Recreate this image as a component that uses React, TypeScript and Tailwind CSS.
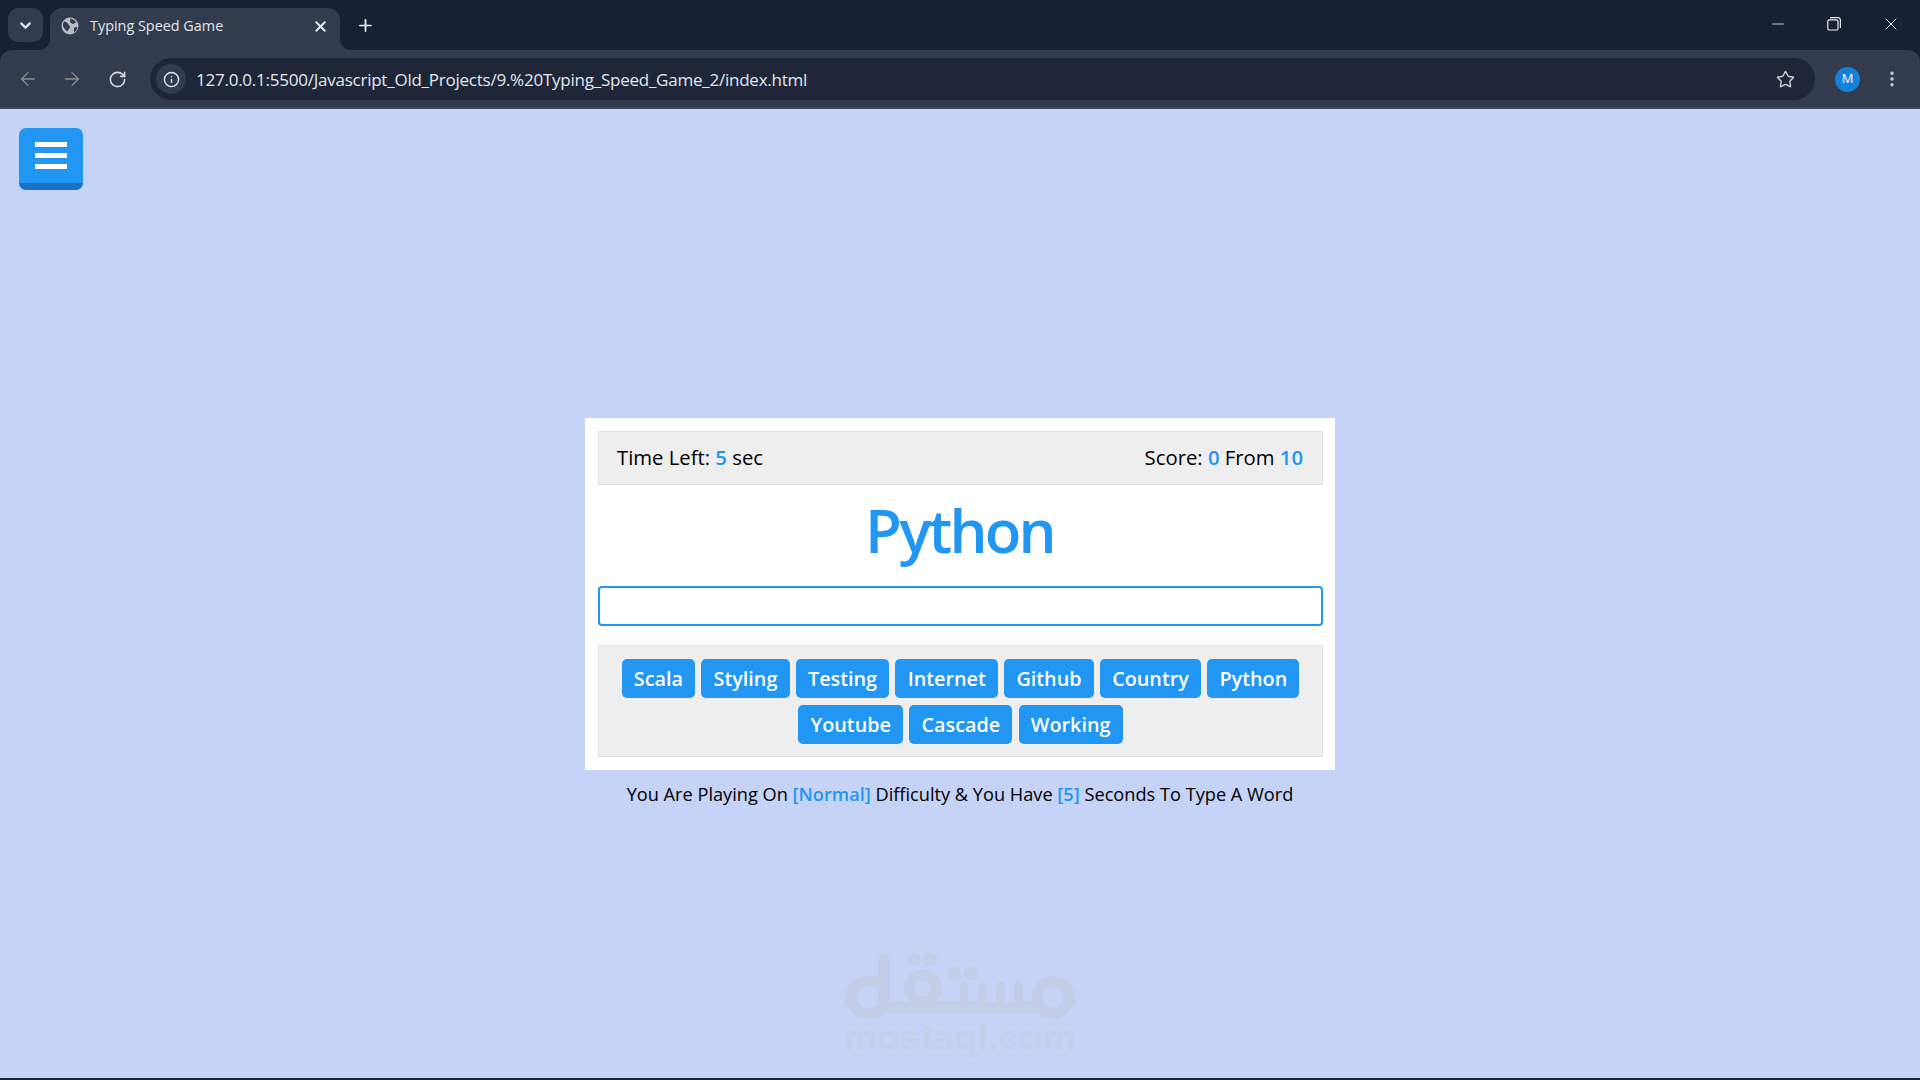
import { ArrowLeft, ArrowRight, ChevronDown, EllipsisVertical, Info, Minus, Plus, RotateCw, Star, X } from "lucide-react";

const words = ["Scala", "Styling", "Testing", "Internet", "Github", "Country", "Python", "Youtube", "Cascade", "Working"];

function Restore() {
  return (
    <svg width="14" height="14" viewBox="0 0 14 14" fill="none" stroke="#e8eaed" strokeWidth="1.2">
      <rect x="0.8" y="2.8" width="10.2" height="10.2" rx="1.6" />
      <path d="M3 .7h8.2a2.2 2.2 0 0 1 2.2 2.2V11" />
    </svg>
  );
}

function Globe() {
  return (
    <svg width="18" height="18" viewBox="0 0 18 18">
      <circle cx="9" cy="9" r="8.5" fill="#b9bcc2" />
      <path d="M3 4.500c2 .3 3.500 1 4 2.500s2 1.200 2 3-2 2-2.500 4.500C4 13 3 11 2 9c0-2 .3-3.300 1-4.500zM9.500 1.500c2 .5 4 1.500 5.500 3.500l-2.500 2c-1.500-.3-3-1-3.500-2.300zM13 10.500l3.500-.5c-.3 2.500-1.500 4.300-3.500 5.500z" fill="#333c4f" />
    </svg>
  );
}

function MostaqlLogo() {
  return (
    <svg width="280" height="100" viewBox="0 0 840 300" fill="none" stroke="#c3cee6" strokeLinecap="round" strokeLinejoin="round">
      <path d="M192 84V232H665" strokeWidth="34" />
      <path d="M172 156C128 146 92 170 92 202C92 234 122 252 150 250C170 248 188 242 192 232" strokeWidth="34" />
      <circle cx="308" cy="175" r="40" strokeWidth="32" />
      <circle cx="700" cy="202" r="48" strokeWidth="34" />
      <path d="M432 168V232M487 172V232M542 168V232M596 162V232" strokeWidth="26" />
      <circle cx="283" cy="88" r="21" fill="#c3cee6" stroke="none" />
      <circle cx="331" cy="88" r="21" fill="#c3cee6" stroke="none" />
      <circle cx="403" cy="130" r="21" fill="#c3cee6" stroke="none" />
      <circle cx="452" cy="130" r="21" fill="#c3cee6" stroke="none" />
    </svg>
  );
}

export default function App() {
  return (
    <div className="flex h-[1080px] w-[1920px] flex-col overflow-hidden bg-[#182133] font-['Open_Sans','Noto_Sans',sans-serif] text-black">
      <header className="flex h-[50px] shrink-0 items-end pl-[8px]">
        <div className="mb-[8px] flex h-[34px] w-[35px] items-center justify-center rounded-[10px] bg-[#333c4f]">
          <ChevronDown size={17} strokeWidth={3} color="#e8eaed" />
        </div>
        <div className="relative ml-[7px] flex h-[42px] w-[290px] items-center rounded-t-[12px] bg-[#333c4f] pb-[6px] pl-[11px] pr-[11px]">
          <span className="absolute bottom-0 left-[-12px] h-[12px] w-[12px] bg-[radial-gradient(circle_at_0_0,transparent_12px,#333c4f_12.5px)]" />
          <span className="absolute bottom-0 right-[-12px] h-[12px] w-[12px] bg-[radial-gradient(circle_at_100%_0,transparent_12px,#333c4f_12.5px)]" />
          <Globe />
          <span className="ml-[11px] flex-1 text-[14.400px] text-[#e3e6ea]">Typing Speed Game</span>
          <X size={17} strokeWidth={2.6} color="#eceef1" />
        </div>
        <div className="mb-[8px] ml-[8px] flex h-[34px] w-[34px] items-center justify-center">
          <Plus size={19} strokeWidth={2.2} color="#eceef1" />
        </div>
        <div className="ml-auto mb-[5px] flex h-[42px] items-center">
          <div className="flex w-[56px] justify-center"><Minus size={16} strokeWidth={1.2} color="#e8eaed" className="scale-x-[1.15]" /></div>
          <div className="flex w-[56px] justify-center"><Restore /></div>
          <div className="flex w-[58px] justify-center"><X size={20} strokeWidth={1.2} color="#e8eaed" /></div>
        </div>
      </header>

      <div className="flex h-[59px] shrink-0 items-start rounded-t-[12px] border-b-[2px] border-[#3d4558] bg-[#333c4f] pt-[8px]">
        <div className="flex h-[42px] items-center pl-[17px]">
          <ArrowLeft size={22} strokeWidth={1.4} color="#8f8f8f" />
          <ArrowRight size={22} strokeWidth={1.4} color="#8f8f8f" className="ml-[22px]" />
          <RotateCw size={19} strokeWidth={2} color="#d9dbdf" className="ml-[25px]" />
        </div>
        <div className="ml-[23px] flex h-[42px] w-[1665px] items-center rounded-full bg-[#1e2638] pl-[6px] pr-[20px]">
          <div className="flex h-[30px] w-[30px] items-center justify-center rounded-full bg-[#333c4f]">
            <Info size={17} strokeWidth={2} color="#e3e6ea" />
          </div>
          <span className="ml-[10px] flex-1 pt-[2px] text-[17px] tracking-[-0.24px] text-[#e3e8f0]">127.0.0.1:5500/Javascript_Old_Projects/9.%20Typing_Speed_Game_2/index.html</span>
          <Star size={19} strokeWidth={1.8} color="#c9cbcf" />
        </div>
        <div className="ml-[20px] flex h-[42px] items-center">
          <div className="flex h-[25px] w-[25px] items-center justify-center rounded-full bg-[#1482d8] text-[13px] text-white">M</div>
          <EllipsisVertical size={20} strokeWidth={2.2} color="#c6c9d0" className="ml-[22px]" />
        </div>
      </div>

      <main className="relative flex flex-1 flex-col bg-[#c5d3f6]">
        <button className="ml-[19px] mt-[19px] flex h-[62px] w-[64px] flex-col items-center gap-[6px] self-start rounded-[7px] border-b-[7px] border-[#1a72c4] bg-[#2196f3] pt-[14px]">
          <span className="h-[5px] w-[32px] bg-white" />
          <span className="h-[5px] w-[32px] bg-white" />
          <span className="h-[5px] w-[32px] bg-white" />
        </button>

        <section className="mx-auto mt-[228px] w-[750px] bg-white py-[13px] pl-[13px] pr-[12px]">
          <div className="flex h-[54px] items-center justify-between border border-[#e3e3e3] bg-[#eeeeee] pb-[2px] pl-[18px] pr-[19px] text-[20.300px]">
            <div>Time Left: <span className="font-semibold text-[#2196f3]">5</span> sec</div>
            <div>Score: <span className="font-semibold text-[#2196f3]">0</span> From <span className="font-semibold text-[#2196f3]">10</span></div>
          </div>
          <h1 className="flex h-[101px] items-center justify-center pb-[12px] pr-[2px] text-[60px] font-semibold leading-none tracking-[-2.8px] text-[#2196f3]">Python</h1>
          <input aria-label="word" className="block h-[40px] w-full rounded-[4px] border-[2px] border-[#2196f3] bg-white outline-none" />
          <div className="mt-[19px] flex h-[112px] flex-wrap content-center justify-center gap-[6.100px] border border-[#e3e3e3] bg-[#eeeeee] px-[18px] pt-[1px]">
            {words.map((w) => (
              <span key={w} className="flex h-[39.800px] items-center rounded-[5px] bg-[#2196f3] px-[12.250px] text-[19.800px] font-semibold text-white">{w}</span>
            ))}
          </div>
        </section>

        <p className="mt-[11px] text-center text-[18.200px] leading-[27px]">
          You Are Playing On <span className="font-semibold text-[#2196f3]">[Normal]</span> Difficulty &amp; You Have <span className="font-semibold text-[#2196f3]">[5]</span> Seconds To Type A Word
        </p>

        <div className="absolute left-[820px] top-[821px] flex w-[280px] flex-col items-center">
          <MostaqlLogo />
          <span className="mt-[-14px] font-['Liberation_Sans',sans-serif] text-[37px] font-bold leading-[44px] tracking-[0.4px] text-[#c4cfe9]">mostaql.com</span>
        </div>
      </main>
      <div className="h-[2px] shrink-0 bg-[#1e2430]" />
    </div>
  );
}
